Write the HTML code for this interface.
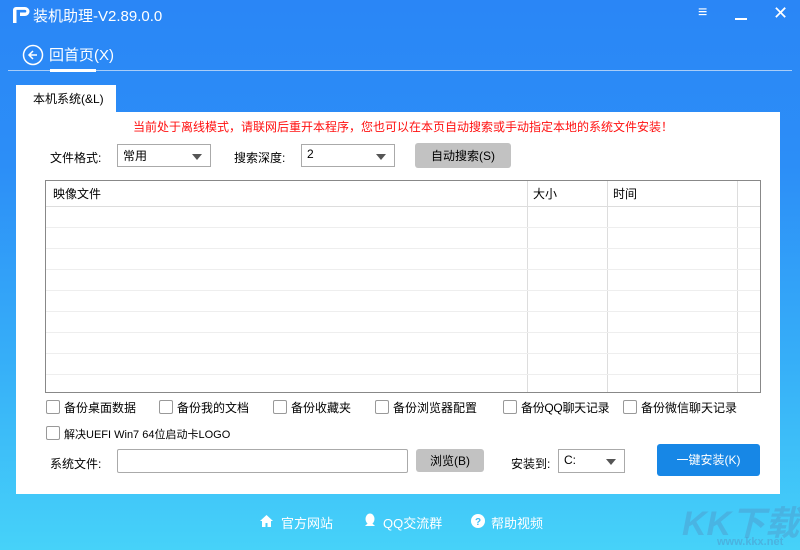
<!DOCTYPE html>
<html><head><meta charset="utf-8"><style>
*{margin:0;padding:0;box-sizing:border-box}
body{width:800px;height:550px;overflow:hidden;position:relative;font-family:"Liberation Sans","Noto Sans CJK SC",sans-serif;font-size:12px;color:#000;
background:linear-gradient(180deg,#2a86f6 0%,#2c8ef7 30%,#36aef8 65%,#46d2f9 100%)}
.a{position:absolute}
.w{color:#fff}
.panel{left:16px;top:112px;width:764px;height:382px;background:#fff}
.sel{background:#fff;border:1px solid #aaa;height:23px;padding:2px 5px;font-size:12px}
.sel:after{content:"";position:absolute;right:8px;top:9px;border:5px solid transparent;border-top:6px solid #555}
.btn{background:#c2c2c2;border-radius:3px;text-align:center;font-size:12px}
.cb{width:14px;height:14px;border:1px solid #999;border-radius:2px;background:#fff}
.hl{height:1px;background:#eee;left:46px;width:714px}
.vl{width:1px;background:#ddd;top:181px;height:211px}
</style></head><body>
<svg class="a" style="left:12px;top:6px" width="20" height="18" viewBox="0 0 20 18"><path d="M1 17V4a3 3 0 0 1 3-3h9a4.5 4.5 0 0 1 0 9H8V6.5h5a1.3 1.3 0 0 0 0-2.6H4.5V17z" fill="#fff"/></svg>
<div class="a w" style="left:33px;top:5px;font-size:15px">装机助理-V2.89.0.0</div>
<div class="a w" style="left:698px;top:5px;font-size:16px;line-height:16px">≡</div>
<div class="a" style="left:735px;top:18px;width:12px;height:2px;background:#fff"></div>
<div class="a w" style="left:773px;top:3px;font-size:18px">✕</div>
<svg class="a" style="left:22px;top:44px" width="22" height="22"><circle cx="11" cy="11" r="9.5" fill="none" stroke="#fff" stroke-width="1.5"/><path d="M15 11H7M11 7l-4 4 4 4" fill="none" stroke="#fff" stroke-width="1.5"/></svg>
<div class="a w" style="left:49px;top:44px;font-size:15px">回首页(X)</div>
<div class="a" style="left:8px;top:70px;width:784px;height:1px;background:#a8cdf8"></div>
<div class="a" style="left:50px;top:69px;width:46px;height:3px;background:#fff"></div>
<div class="a" style="left:16px;top:85px;width:100px;height:28px;background:#fff;padding:5px 0 0 17px">本机系统(&amp;L)</div>
<div class="a panel"></div>
<div class="a" style="left:133px;top:118px;color:#f11;font-size:12px">当前处于离线模式，请联网后重开本程序，您也可以在本页自动搜索或手动指定本地的系统文件安装！</div>
<div class="a" style="left:50px;top:149px">文件格式:</div>
<div class="a sel" style="left:117px;top:144px;width:94px">常用</div>
<div class="a" style="left:234px;top:149px">搜索深度:</div>
<div class="a sel" style="left:301px;top:144px;width:94px">2</div>
<div class="a btn" style="left:415px;top:143px;width:96px;height:25px;padding-top:4px">自动搜索(S)</div>
<div class="a" style="left:45px;top:180px;width:716px;height:213px;border:1px solid #888"></div>
<div class="a" style="left:53px;top:185px">映像文件</div>
<div class="a" style="left:533px;top:185px">大小</div>
<div class="a" style="left:613px;top:185px">时间</div>
<div class="a vl" style="left:527px"></div><div class="a vl" style="left:607px"></div><div class="a vl" style="left:737px"></div>
<div class="a hl" style="top:206px;background:#ddd"></div>
<div class="a hl" style="top:227px"></div><div class="a hl" style="top:248px"></div><div class="a hl" style="top:269px"></div><div class="a hl" style="top:290px"></div><div class="a hl" style="top:311px"></div><div class="a hl" style="top:332px"></div><div class="a hl" style="top:353px"></div><div class="a hl" style="top:374px"></div>
<div class="a cb" style="left:46px;top:400px"></div><div class="a" style="left:64px;top:399px">备份桌面数据</div>
<div class="a cb" style="left:159px;top:400px"></div><div class="a" style="left:177px;top:399px">备份我的文档</div>
<div class="a cb" style="left:273px;top:400px"></div><div class="a" style="left:291px;top:399px">备份收藏夹</div>
<div class="a cb" style="left:375px;top:400px"></div><div class="a" style="left:393px;top:399px">备份浏览器配置</div>
<div class="a cb" style="left:503px;top:400px"></div><div class="a" style="left:521px;top:399px;letter-spacing:-0.3px">备份QQ聊天记录</div>
<div class="a cb" style="left:623px;top:400px"></div><div class="a" style="left:641px;top:399px">备份微信聊天记录</div>
<div class="a cb" style="left:46px;top:426px"></div><div class="a" style="left:64px;top:426px;font-size:11px">解决UEFI Win7 64位启动卡LOGO</div>
<div class="a" style="left:50px;top:455px">系统文件:</div>
<div class="a" style="left:117px;top:449px;width:291px;height:24px;border:1px solid #aaa;border-radius:2px"></div>
<div class="a btn" style="left:416px;top:449px;width:68px;height:23px;padding-top:3px">浏览(B)</div>
<div class="a" style="left:511px;top:455px">安装到:</div>
<div class="a sel" style="left:558px;top:449px;width:67px;height:24px;padding-top:3px">C:</div>
<div class="a" style="left:657px;top:444px;width:103px;height:32px;background:#1787e6;border-radius:3px;color:#fff;text-align:center;padding-top:7px">一键安装(K)</div>
<svg class="a" style="left:259px;top:514px" width="15" height="14"><path d="M7.5 1L1 7h2v6h3.5V9h2v4H12V7h2z" fill="#fff"/></svg>
<div class="a w" style="left:281px;top:513px;font-size:13px">官方网站</div>
<svg class="a" style="left:363px;top:513px" width="14" height="16"><ellipse cx="7" cy="6" rx="4.5" ry="5.5" fill="#fff"/><path d="M2 13q5-6 10 0z" fill="#fff"/></svg>
<div class="a w" style="left:383px;top:513px;font-size:13px">QQ交流群</div>
<svg class="a" style="left:471px;top:514px" width="14" height="14"><circle cx="7" cy="7" r="7" fill="#fff"/><text x="7" y="11" font-size="10" font-weight="bold" text-anchor="middle" fill="#3bbbf8" font-family="Liberation Sans">?</text></svg>
<div class="a w" style="left:491px;top:513px;font-size:13px">帮助视频</div>
<div class="a" style="left:682px;top:496px;color:rgba(80,150,200,.45);font-size:34px;font-weight:bold;font-style:italic">KK下载</div>
<div class="a" style="left:717px;top:536px;color:rgba(80,150,200,.5);font-size:11px;font-weight:bold">www.kkx.net</div>
</body></html>
